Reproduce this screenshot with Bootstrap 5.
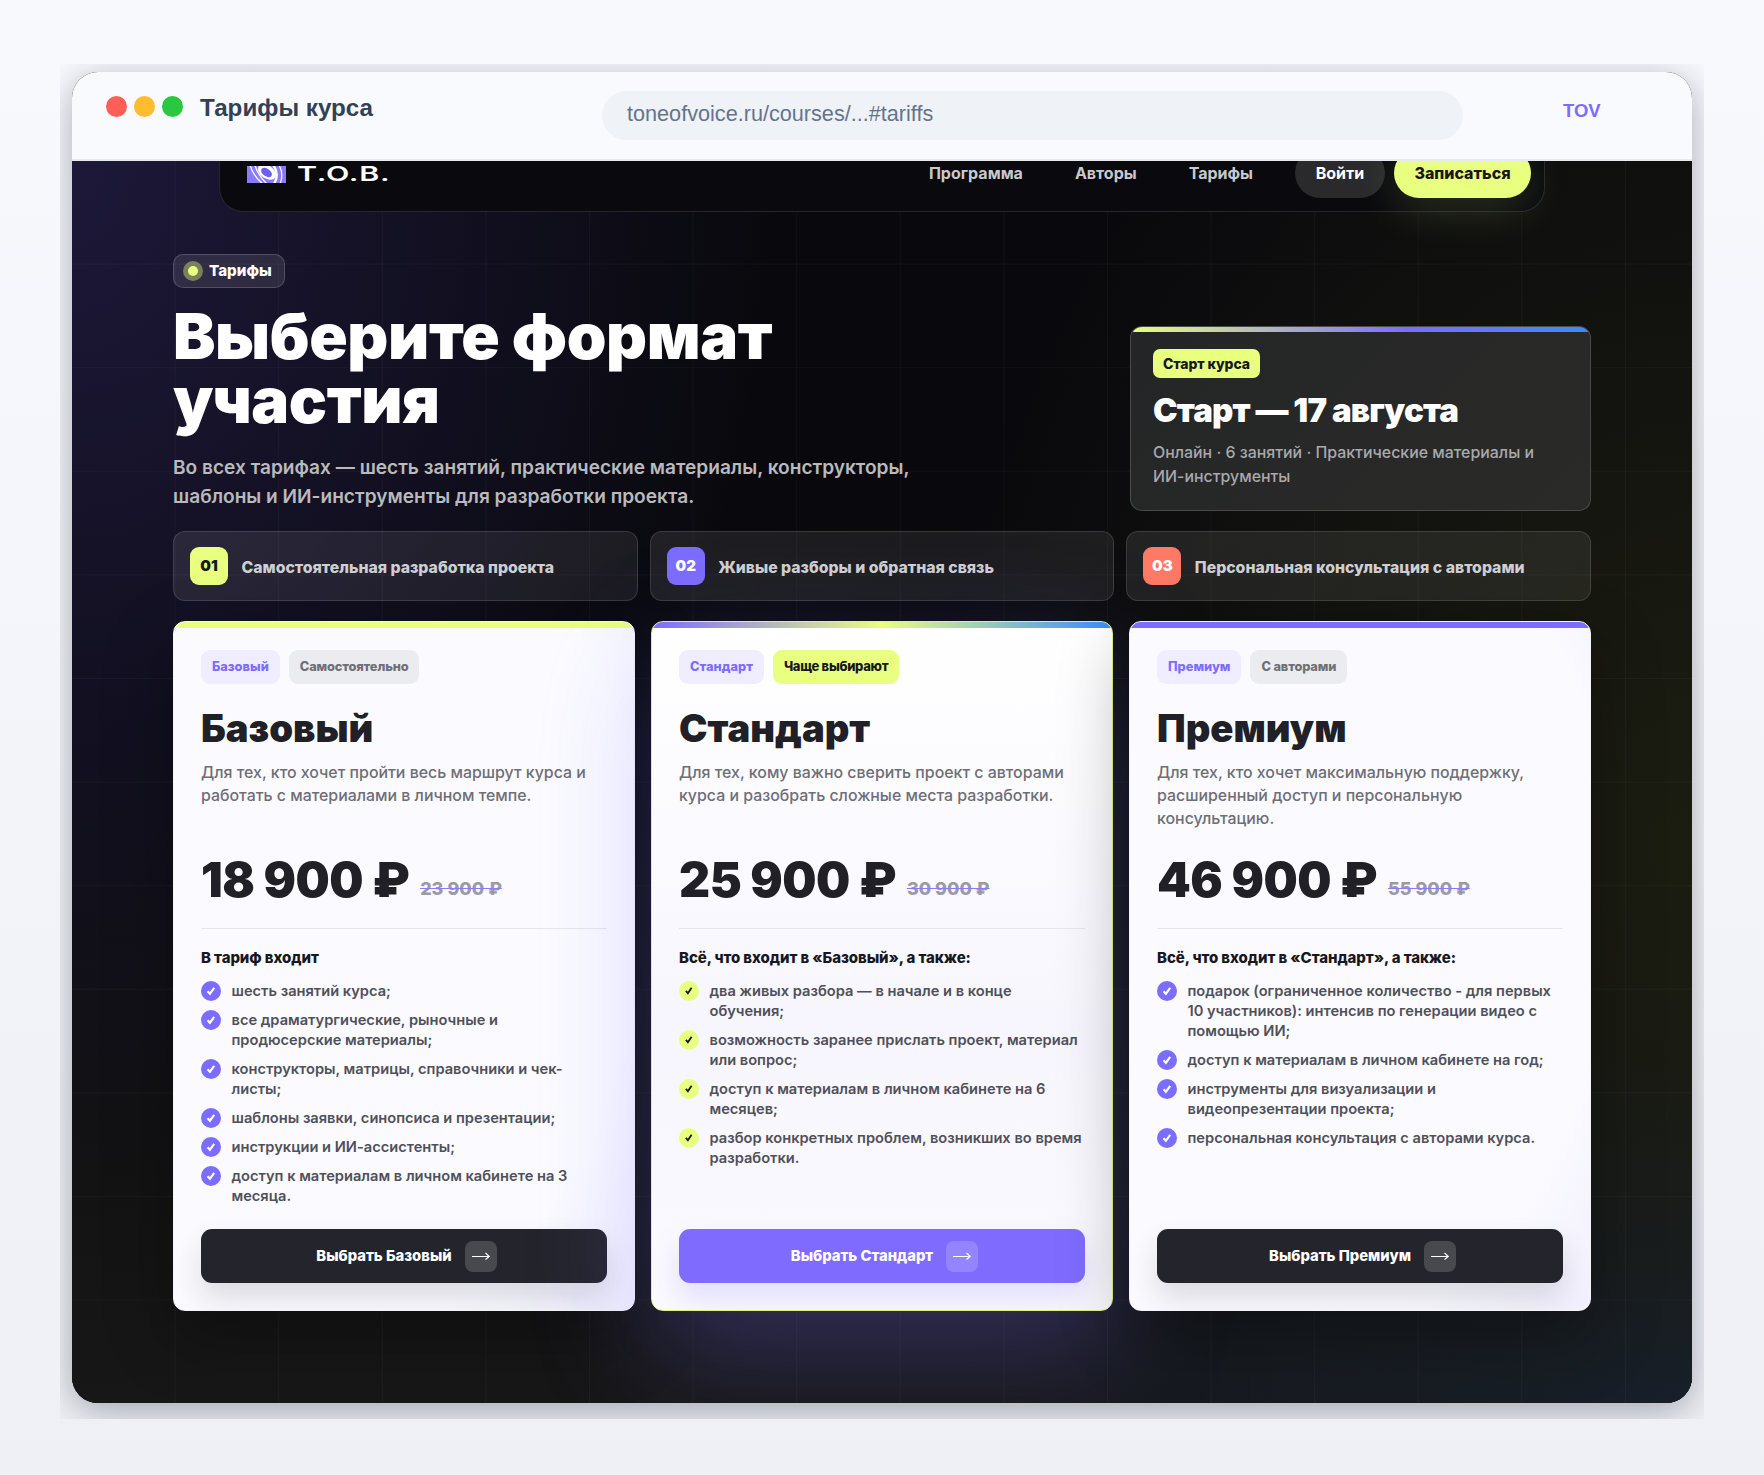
<!DOCTYPE html>
<html lang="ru">
  <head>
    <meta charset="UTF-8" />
    <meta name="viewport" content="width=device-width, initial-scale=1" />
    <title>Тарифы курса</title>
    <link href="https://cdn.jsdelivr.net/npm/bootstrap@5.3.0/dist/css/bootstrap.min.css" rel="stylesheet" />
    <style>
      body {
        background: linear-gradient(180deg, #f8f9fd 0%, #eff0f5 100%);
        font-family: Inter, "Noto Sans", sans-serif;
        min-height: 1475px;
      }
      /* browser frame */
      .shot-clip { margin: 64px 60px 0; height: 1355px; padding: 8px 12px; overflow: hidden; }
      .win {
        height: 1331px; border-radius: 26px; overflow: hidden; background: #0b0b10;
        box-shadow: 0 8px 36px rgba(15, 23, 42, .34);
      }
      .win-bar {
        position: relative; z-index: 3; height: 89px; padding: 0 30px 0 34px; background: #f9fafd;
        border-bottom: 2px solid #e8eaef; font-family: "Liberation Sans", Arial, sans-serif;
      }
      .win-dots { gap: 7px; margin-top: -18px; }
      .win-dot { width: 21px; height: 21px; border-radius: 50%; }
      .win-title { font-size: 24.200px; font-weight: 700; color: #334155; margin: -14px 0 0 17px; width: 402px; }
      .win-url {
        width: 861px; height: 49px; padding: 8px 24px 0 25px; border-radius: 25px; background: #eff2f7;
        color: #64748b; font-size: 21.650px; line-height: 30px;
      }
      .win-tov { color: #7c6cff; font-size: 18.500px; font-weight: 700; margin: -10px 0 0 100px; }

      /* dark page */
      .scene {
        display: flow-root; height: 1242px; padding: 0 101px;
        background-color: #0b0b10;
        background-image:
          linear-gradient(90deg, transparent calc(100% - 1px), rgba(255, 255, 255, .03) 0),
          linear-gradient(180deg, transparent calc(100% - 1px), rgba(255, 255, 255, .03) 0),
          radial-gradient(700px 1000px at 0 0, #1d1839 0%, rgba(29, 24, 57, 0) 100%),
          radial-gradient(760px 1000px at 100% 55%, #1c1d11 0%, rgba(28, 29, 17, 0) 100%),
          radial-gradient(700px 420px at 100% 100%, #13203c 0%, rgba(19, 32, 60, 0) 100%),
          linear-gradient(180deg, #09090d 40%, #171717 100%);
        background-size: 103.6px 103.6px, 103.6px 103.6px, auto, auto, auto, auto;
      }
      .top-nav {
        width: 1326px; height: 77px; margin: -26px 0 0 46px; padding: 13px 13px 15px 27px;
        border: 1px solid rgba(255, 255, 255, .12); border-radius: 0 0 24px 24px; background: #0a0a0e;
      }
      .logo-mark { width: 39px; height: 17px; margin-top: 3px; }
      .logo-text {
        display: inline-block; color: #fff; font-size: 20px; font-weight: 600; margin: 3px 0 0 11px;
        transform: scaleX(1.52); transform-origin: left center; letter-spacing: .5px; line-height: 1;
      }
      .nav-links { gap: 52px; margin-right: 42px; }
      .nav-links a { color: #c9c9cd; font-size: 16px; font-weight: 700; text-decoration: none; }
      .nav-btn { height: 50px; border-radius: 25px; font-size: 16px; font-weight: 700; border: 0; padding: 0 20px; }
      .nav-btn-dark { background: #2a2a2d; color: #fff; width: 90px; margin-right: 9px; }
      .nav-btn-lime { background: #e8ff80; color: #17171d; width: 137px; font-weight: 800; box-shadow: 0 10px 46px rgba(232, 255, 128, .16); }

      /* heading */
      .head-row { margin-top: 42px; }
      .sec-tag {
        height: 34px; padding: 0 12px 0 9px; border-radius: 10px; gap: 6px; color: #fff; font-size: 15.200px; font-weight: 800;
        border: 1px solid rgba(255, 255, 255, .17); background: rgba(255, 255, 255, .1);
      }
      .sec-dot {
        width: 20px; height: 20px; border-radius: 50%; background: rgba(232, 255, 128, .4);
        position: relative;
      }
      .sec-dot::after { content: ""; position: absolute; inset: 5px; border-radius: 50%; background: #e8ff80; }
      .hero-title { color: #fff; font-size: 63.600px; font-weight: 900; line-height: 64px; margin: 16px 0 21px; letter-spacing: -.4px; }
      .hero-sub { color: #b9b9be; font-size: 19.100px; font-weight: 600; line-height: 29px; margin: 0; width: 780px; }
      .start-box {
        position: relative; width: 461px; height: 185px; padding: 22px 22px; border-radius: 12px; overflow: hidden;
        border: 1px solid rgba(255, 255, 255, .16); background: linear-gradient(135deg, #242526, #2a2b28);
      }
      .start-box::before {
        content: ""; position: absolute; left: 0; right: 0; top: 0; height: 5px;
        background: linear-gradient(90deg, #e8ff80, #7c6cff 60%, #3b8bff);
      }
      .start-tag { display: inline-block; padding: 6px 10px; border-radius: 7px; background: #e8ff80; color: #17171d; font-size: 14px; font-weight: 800; line-height: 17px; letter-spacing: -.1px; }
      .start-title { color: #fff; font-size: 33px; font-weight: 900; line-height: 40px; margin: 12px 0 11px; letter-spacing: -.85px; }
      .start-text { color: #a9a9ad; font-size: 15.900px; font-weight: 550; line-height: 24px; margin: 0; max-width: 400px; }

      /* three steps */
      .step-row { display: grid; grid-template-columns: repeat(3, 1fr); gap: 12px; margin-top: 20px; }
      .step-item {
        height: 70px; padding: 0 16px; gap: 13.500px; border-radius: 12px; color: #cfcfd2; font-size: 15.800px; font-weight: 800;
        border: 1px solid rgba(255, 255, 255, .13); background: linear-gradient(135deg, rgba(255, 255, 255, .09), rgba(255, 255, 255, .07));
      }
      .step-text { margin-top: 4px; }
      .step-num { width: 38px; height: 38px; border-radius: 9px; font-size: 15px; font-weight: 900; }
      .bg-lime { background: #e8ff80; color: #17171d; }
      .bg-violet { background: #7c6cff; color: #fff; }
      .bg-coral { background: #ff7a66; color: #fff; }

      /* tariff cards */
      .plans { margin-top: 4px; }
      .plan-card {
        position: relative; height: 100%; padding: 28px 27px 27px 27px; border-radius: 12px; overflow: hidden; border: 1px solid #f2f2f8;
        background: radial-gradient(100% 90% at 30% 40%, #fbfbff 72%, #f0eefd 100%);
        box-shadow: 0 24px 70px rgba(0, 0, 0, .32);
      }
      .plan-card::before { content: ""; position: absolute; left: 0; right: 0; top: 0; height: 6px; background: #7c6cff; }
      .plan-card.plan-base::before { background: #e8ff80; }
      .plan-card.plan-top {
        border-color: #e0f083;
        background: linear-gradient(180deg, #ffffff 0%, #f7f6fe 60%, #fbfafe 100%);
        box-shadow: 0 40px 120px rgba(124, 108, 255, .3);
      }
      .plan-card.plan-top::before { background: linear-gradient(90deg, #7c6cff, #e8ff80 50%, #3b8bff); }
      .chip-row { gap: 9px; }
      .plan-chip { height: 34px; padding: 0 11px; border-radius: 9px; font-size: 13px; font-weight: 700; }
      .chip-soft { background: #efedff; color: #7c6cff; font-weight: 800; font-size: 12.800px; }
      .chip-gray { background: #ebecef; color: #6f6f78; font-weight: 800; font-size: 12.800px; letter-spacing: -.15px; }
      .plan-chip.bg-lime { font-weight: 800; letter-spacing: -.3px; }
      .plan-name { color: #202026; font-size: 38.200px; font-weight: 900; line-height: 46px; margin: 21px 0 11px; }
      .plan-desc { color: #6e6e76; font-size: 15.900px; font-weight: 550; line-height: 22.900px; min-height: 69px; margin: 0; }
      .price-line { margin-top: 19px; height: 60px; gap: 11px; }
      .price-now { color: #202026; font-size: 48.200px; font-weight: 900; line-height: 60px; letter-spacing: -.5px; }
      .price-old { color: #9a9aa5; font-size: 18px; font-weight: 800; line-height: 24px; text-decoration: line-through; text-decoration-color: #8a7aff; margin-top: 18px; }
      .plan-line { height: 1px; background: #e6e7ed; margin: 18px 0 19px; }
      .list-head { color: #17171d; font-size: 15px; font-weight: 800; line-height: 20px; margin-bottom: 13px; letter-spacing: -.08px; }
      .plan-list { list-style: none; padding: 0; margin: 0 0 23px; display: flex; flex-direction: column; gap: 9px; }
      .plan-list li { display: flex; gap: 10.500px; color: #50505a; font-size: 14.650px; font-weight: 600; line-height: 20px; }
      .tick { flex: 0 0 20px; width: 20px; height: 20px; }
      .plan-btn {
        height: 54px; border-radius: 11px; border: 0; gap: 13px; padding-left: 17px; color: #fff; font-size: 14.800px; font-weight: 800;
        background: #24242c; box-shadow: 0 16px 30px rgba(20, 20, 40, .14);
      }
      .plan-btn.btn-violet { background: #7f6cff; box-shadow: 0 16px 30px rgba(124, 108, 255, .2); }
      .plan-btn:hover { color: #fff; background: #24242c; }
      .plan-btn.btn-violet:hover { background: #7f6cff; }
      .arrow-box { width: 32px; height: 31px; border-radius: 8px; background: rgba(255, 255, 255, .17); }
    </style>
  </head>
  <body>
    <svg width="0" height="0" class="position-absolute">
      <symbol id="tick-v" viewBox="0 0 20 20"><circle cx="10" cy="10" r="10" fill="#7c6cff" /><path d="M6.6 10.200l2.300 2.600 4.300-6" fill="none" stroke="#fff" stroke-width="2.200" /></symbol>
      <symbol id="tick-l" viewBox="0 0 20 20"><circle cx="10" cy="10" r="10" fill="#e8ff80" /><path d="M6.900 9.900l2 2.400 3.700-5.600" fill="none" stroke="#17171d" stroke-width="1.800" /></symbol>
      <symbol id="arrow" viewBox="0 0 20 12"><path d="M1 6.500h17M14.500 3l3.800 3.500-3.800 3" fill="none" stroke="#fff" stroke-width="1.100" /></symbol>
    </svg>

    <div class="shot-clip">
      <div class="win">
        <!-- browser bar -->
        <div class="win-bar d-flex align-items-center">
          <div class="d-flex win-dots">
            <span class="win-dot" style="background: #ff5f57"></span>
            <span class="win-dot" style="background: #febc2e"></span>
            <span class="win-dot" style="background: #28c840"></span>
          </div>
          <div class="win-title">Тарифы курса</div>
          <div class="win-url">toneofvoice.ru/courses/...#tariffs</div>
          <div class="win-tov">TOV</div>
        </div>

        <div class="scene">
          <!-- site nav, scrolled under the bar -->
          <div class="top-nav d-flex align-items-center">
            <svg class="logo-mark" viewBox="0 0 39 17">
              <rect width="39" height="17" fill="#8b7aff" />
              <path d="M3 -1Q6 10 16 18M8 -1Q10 8 20 18" stroke="#fff" stroke-width="1.300" fill="none" />
              <ellipse cx="20" cy="6" rx="10" ry="6.500" transform="rotate(35 20 6)" fill="#fff" />
              <ellipse cx="19.500" cy="6.500" rx="6" ry="3.800" transform="rotate(35 19.500 6.500)" fill="#6f5ff0" />
              <path d="M26 -1Q33 8 27 18" stroke="#fff" stroke-width="2.400" fill="none" />
              <path d="M32 -1Q37 8 33 18" stroke="#fff" stroke-width="1.200" fill="none" />
            </svg>
            <span class="logo-text">T.O.B.</span>
            <div class="nav-links d-flex ms-auto">
              <a href="#">Программа</a>
              <a href="#">Авторы</a>
              <a href="#">Тарифы</a>
            </div>
            <button class="btn nav-btn nav-btn-dark p-0">Войти</button>
            <button class="btn nav-btn nav-btn-lime p-0">Записаться</button>
          </div>

          <!-- heading -->
          <div class="head-row d-flex justify-content-between align-items-end">
            <div>
              <div class="sec-tag d-inline-flex align-items-center"><span class="sec-dot"></span>Тарифы</div>
              <h1 class="hero-title">Выберите формат<br />участия</h1>
              <p class="hero-sub">Во всех тарифах — шесть занятий, практические материалы, конструкторы, шаблоны и ИИ-инструменты для разработки проекта.</p>
            </div>
            <div class="start-box">
              <span class="start-tag">Старт курса</span>
              <div class="start-title">Старт — 17 августа</div>
              <p class="start-text">Онлайн · 6 занятий · Практические материалы и ИИ-инструменты</p>
            </div>
          </div>

          <!-- steps -->
          <div class="step-row">
            <div class="step-item d-flex align-items-center"><span class="step-num bg-lime d-flex align-items-center justify-content-center">01</span><span class="step-text">Самостоятельная разработка проекта</span></div>
            <div class="step-item d-flex align-items-center"><span class="step-num bg-violet d-flex align-items-center justify-content-center">02</span><span class="step-text">Живые разборы и обратная связь</span></div>
            <div class="step-item d-flex align-items-center"><span class="step-num bg-coral d-flex align-items-center justify-content-center">03</span><span class="step-text">Персональная консультация с авторами</span></div>
          </div>

          <!-- plans -->
          <div class="plans row row-cols-3 g-3">
            <div class="col">
              <div class="plan-card plan-base d-flex flex-column">
                <div class="d-flex chip-row">
                  <span class="plan-chip chip-soft d-flex align-items-center">Базовый</span>
                  <span class="plan-chip chip-gray d-flex align-items-center">Самостоятельно</span>
                </div>
                <h2 class="plan-name">Базовый</h2>
                <p class="plan-desc">Для тех, кто хочет пройти весь маршрут курса и работать с материалами в личном темпе.</p>
                <div class="price-line d-flex align-items-center"><span class="price-now">18 900 ₽</span><span class="price-old">23 900 ₽</span></div>
                <div class="plan-line"></div>
                <div class="list-head">В тариф входит</div>
                <ul class="plan-list">
                  <li><svg class="tick"><use href="#tick-v" /></svg><span>шесть занятий курса;</span></li>
                  <li><svg class="tick"><use href="#tick-v" /></svg><span>все драматургические, рыночные и продюсерские материалы;</span></li>
                  <li><svg class="tick"><use href="#tick-v" /></svg><span>конструкторы, матрицы, справочники и чек-листы;</span></li>
                  <li><svg class="tick"><use href="#tick-v" /></svg><span>шаблоны заявки, синопсиса и презентации;</span></li>
                  <li><svg class="tick"><use href="#tick-v" /></svg><span>инструкции и ИИ-ассистенты;</span></li>
                  <li><svg class="tick"><use href="#tick-v" /></svg><span>доступ к материалам в личном кабинете на 3 месяца.</span></li>
                </ul>
                <button class="btn plan-btn d-flex align-items-center justify-content-center mt-auto">Выбрать Базовый<span class="arrow-box d-flex align-items-center justify-content-center"><svg width="20" height="12"><use href="#arrow" /></svg></span></button>
              </div>
            </div>
            <div class="col">
              <div class="plan-card plan-top d-flex flex-column">
                <div class="d-flex chip-row">
                  <span class="plan-chip chip-soft d-flex align-items-center">Стандарт</span>
                  <span class="plan-chip bg-lime d-flex align-items-center">Чаще выбирают</span>
                </div>
                <h2 class="plan-name">Стандарт</h2>
                <p class="plan-desc">Для тех, кому важно сверить проект с авторами курса и разобрать сложные места разработки.</p>
                <div class="price-line d-flex align-items-center"><span class="price-now">25 900 ₽</span><span class="price-old">30 900 ₽</span></div>
                <div class="plan-line"></div>
                <div class="list-head">Всё, что входит в «Базовый», а также:</div>
                <ul class="plan-list">
                  <li><svg class="tick"><use href="#tick-l" /></svg><span>два живых разбора — в начале и в конце обучения;</span></li>
                  <li><svg class="tick"><use href="#tick-l" /></svg><span>возможность заранее прислать проект, материал или вопрос;</span></li>
                  <li><svg class="tick"><use href="#tick-l" /></svg><span>доступ к материалам в личном кабинете на 6 месяцев;</span></li>
                  <li><svg class="tick"><use href="#tick-l" /></svg><span>разбор конкретных проблем, возникших во время разработки.</span></li>
                </ul>
                <button class="btn plan-btn btn-violet d-flex align-items-center justify-content-center mt-auto">Выбрать Стандарт<span class="arrow-box d-flex align-items-center justify-content-center"><svg width="20" height="12"><use href="#arrow" /></svg></span></button>
              </div>
            </div>
            <div class="col">
              <div class="plan-card d-flex flex-column">
                <div class="d-flex chip-row">
                  <span class="plan-chip chip-soft d-flex align-items-center">Премиум</span>
                  <span class="plan-chip chip-gray d-flex align-items-center">С авторами</span>
                </div>
                <h2 class="plan-name">Премиум</h2>
                <p class="plan-desc">Для тех, кто хочет максимальную поддержку, расширенный доступ и персональную консультацию.</p>
                <div class="price-line d-flex align-items-center"><span class="price-now">46 900 ₽</span><span class="price-old">55 900 ₽</span></div>
                <div class="plan-line"></div>
                <div class="list-head">Всё, что входит в «Стандарт», а также:</div>
                <ul class="plan-list">
                  <li><svg class="tick"><use href="#tick-v" /></svg><span>подарок (ограниченное количество - для первых 10 участников): интенсив по генерации видео с помощью ИИ;</span></li>
                  <li><svg class="tick"><use href="#tick-v" /></svg><span>доступ к материалам в личном кабинете на год;</span></li>
                  <li><svg class="tick"><use href="#tick-v" /></svg><span>инструменты для визуализации и видеопрезентации проекта;</span></li>
                  <li><svg class="tick"><use href="#tick-v" /></svg><span>персональная консультация с авторами курса.</span></li>
                </ul>
                <button class="btn plan-btn d-flex align-items-center justify-content-center mt-auto">Выбрать Премиум<span class="arrow-box d-flex align-items-center justify-content-center"><svg width="20" height="12"><use href="#arrow" /></svg></span></button>
              </div>
            </div>
          </div>
        </div>
      </div>
    </div>
    <script src="https://cdn.jsdelivr.net/npm/bootstrap@5.3.0/dist/js/bootstrap.bundle.min.js"></script>
  </body>
</html>
